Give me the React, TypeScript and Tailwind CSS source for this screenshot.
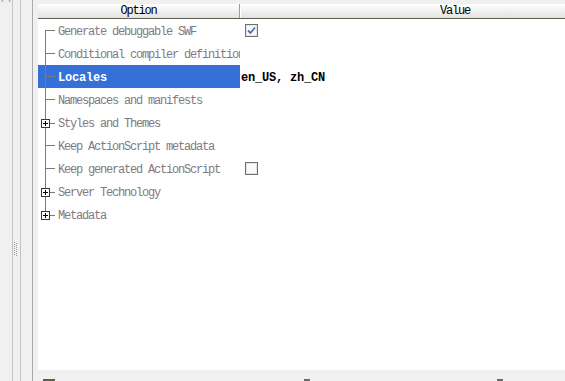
import React from "react";

type Row = {
  label: string;
  kind: "leaf" | "group";
  selected?: boolean;
  value?: React.ReactNode;
};

function TreeGlyph({ kind, first, last }: { kind: "leaf" | "group"; first: boolean; last: boolean }) {
  const stroke = "#7a7a7a";
  return (
    <svg width="20" height="23" className="shrink-0 block">
      {/* vertical guide */}
      {kind === "leaf" ? (
        <line x1="7.5" x2="7.5" y1={first ? 11 : 0} y2={last ? 12 : 23} stroke={stroke} />
      ) : (
        <>
          <line x1="7.5" x2="7.5" y1={first ? 11 : 0} y2="8" stroke={stroke} />
          {!last && <line x1="7.5" x2="7.5" y1="16" y2="23" stroke={stroke} />}
        </>
      )}
      {kind === "leaf" ? (
        <line x1="8" x2="17" y1="11.5" y2="11.5" stroke={stroke} />
      ) : (
        <>
          <rect x="3.5" y="8.5" width="8" height="8" fill="#fff" stroke="#3a3a3a" />
          <line x1="5" x2="10" y1="12.5" y2="12.5" stroke="#000" />
          <line x1="7.5" x2="7.5" y1="10" y2="15" stroke="#000" />
          <line x1="12" x2="17" y1="12.5" y2="12.5" stroke={stroke} />
        </>
      )}
    </svg>
  );
}

function CheckBox({ checked }: { checked: boolean }) {
  return (
    <span className="ml-[5px] w-[13px] h-[13px] border border-[#707070] bg-gradient-to-br from-[#dcdcdc] to-white flex items-center justify-center">
      <span className="w-[11px] h-[11px] bg-[#fafafa] border border-[#e4e4e4] flex items-center justify-center">
        {checked && (
          <svg width="9" height="9" viewBox="0 0 9 9">
            <path d="M1 4.5 L3.5 7 L8 1.5" fill="none" stroke="#4a6db5" strokeWidth="1.8" />
          </svg>
        )}
      </span>
    </span>
  );
}

const rows: Row[] = [
  { label: "Generate debuggable SWF", kind: "leaf", value: <CheckBox checked /> },
  { label: "Conditional compiler definitions", kind: "leaf" },
  {
    label: "Locales",
    kind: "leaf",
    selected: true,
    value: <span className="pl-[1px] pt-[2px] font-bold text-black tracking-[-0.2px]">en_US, zh_CN</span>,
  },
  { label: "Namespaces and manifests", kind: "leaf" },
  { label: "Styles and Themes", kind: "group" },
  { label: "Keep ActionScript metadata", kind: "leaf" },
  { label: "Keep generated ActionScript", kind: "leaf", value: <CheckBox checked={false} /> },
  { label: "Server Technology", kind: "group" },
  { label: "Metadata", kind: "group" },
];

function Grip() {
  const dots = [0, 2, 4, 6, 8, 10, 12];
  return (
    <svg width="5" height="15" className="block">
      {dots.map((y) => (
        <React.Fragment key={y}>
          <rect x="0" y={y} width="1" height="1" fill="#9a9a9a" />
          <rect x="2" y={y + 1} width="1" height="1" fill="#9a9a9a" />
        </React.Fragment>
      ))}
    </svg>
  );
}

export default function App() {
  return (
    <div
      className="w-[565px] h-[381px] flex bg-[#f0f0f0] overflow-hidden text-[12px] tracking-[-1.2px]"
      style={{ fontFamily: '"Liberation Mono", "DejaVu Sans Mono", monospace' }}
    >
      {/* left docked strips */}
      <div className="w-[12px] overflow-hidden">
        <div className="-mt-[7px] pl-[1px] leading-[12px] text-[#9090a8] tracking-normal text-[11px]">Pr</div>
      </div>
      <div className="w-px bg-[#c4c4c4]" />
      <div className="w-[7px] pt-[242px] pl-[1px]">
        <Grip />
      </div>
      <div className="w-px bg-[#c4c4c4]" />
      <div className="w-[11px]" />
      <div className="w-px bg-[#a9a9a9]" />
      <div className="w-[5px]" />

      {/* property table */}
      <div className="flex-1 flex flex-col min-w-0">
        <div className="h-[4px]" />
        <div className="h-[15px] flex bg-gradient-to-b from-white to-[#e2e2e2] border-b border-[#5f5f50] text-black leading-[15px] overflow-hidden">
          <div className="w-[202px] shrink-0 text-center border-r border-[#9c9c9c]">Option</div>
          <div className="w-[429px] shrink-0 text-center border-l border-white">Value</div>
        </div>
        <div className="h-[351px] bg-white flex flex-col">
          {rows.map((row, i) => (
            <div key={row.label} className="h-[23px] flex items-center">
              <div
                className={`w-[202px] shrink-0 h-full flex items-center overflow-hidden whitespace-nowrap ${
                  row.selected ? "bg-[#3470d8]" : ""
                }`}
              >
                <TreeGlyph kind={row.kind} first={i === 0} last={i === rows.length - 1} />
                <span
                  className={`pt-[2px] ${
                    row.selected ? "text-white font-bold tracking-[-0.2px]" : "text-[#847a80]"
                  }`}
                >
                  {row.label}
                </span>
              </div>
              <div className="flex-1 h-full flex items-center whitespace-nowrap">{row.value}</div>
            </div>
          ))}
        </div>
        <div className="h-[11px] flex items-start pt-[9px]">
          <div className="ml-[5px] w-[12px] h-[2px] bg-[#5d5d4c]" />
          <div className="ml-[249px] w-[6px] h-[2px] bg-[#6a6a6a]" />
          <div className="ml-[187px] w-[6px] h-[2px] bg-[#6a6a6a]" />
        </div>
      </div>
    </div>
  );
}
